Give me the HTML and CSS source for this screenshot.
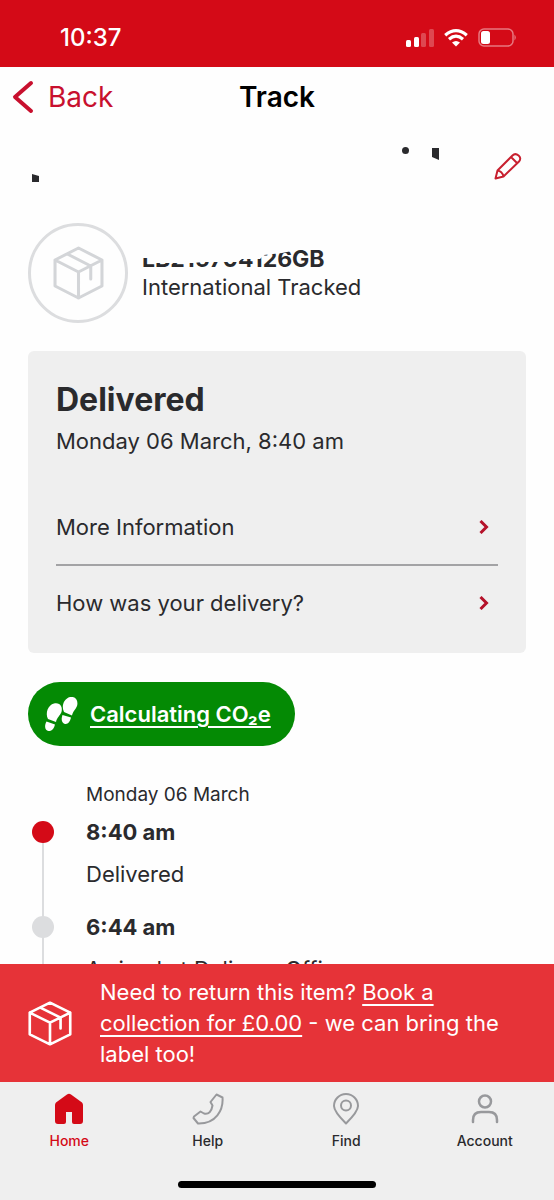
FILE: index.html
```html
<!DOCTYPE html>
<html lang="en">
<head>
<meta charset="utf-8">
<meta name="viewport" content="width=device-width, initial-scale=1">
<title>Track</title>
<link rel="stylesheet" href="styles.css">
</head>
<body>
<svg class="defs" aria-hidden="true">
  <symbol id="parcel" viewBox="0 0 50 54" preserveAspectRatio="none">
    <path d="M25 2 48 14V40L25 52 2 40V14ZM2 14 25 26 48 14M25 26V52M14 8 37 20V33" fill="none" stroke="currentColor" stroke-linejoin="round" stroke-linecap="round"/>
  </symbol>
  <symbol id="chevron" viewBox="0 0 10 14">
    <path d="M1.500 1 7.500 7 1.500 13" fill="none" stroke="currentColor" stroke-width="3"/>
  </symbol>
</svg>
<div class="app">
  <div class="status">
    <span class="clock">10:37</span>
    <div class="signals">
      <svg width="28" height="18" viewBox="0 0 28 18" fill="#fff"><rect x="0" y="11" width="5" height="7" rx="1.5"/><rect x="8" y="8" width="5" height="10" rx="1.5"/><g opacity=".25"><rect x="15" y="4" width="5" height="14" rx="1.5"/><rect x="23" y="0" width="5" height="18" rx="1.5"/></g></svg>
      <svg width="24" height="18" viewBox="0 0 24 18" fill="none" stroke="#fff" stroke-width="3.2"><path d="M1.2 6.2Q12-2.8 22.8 6.2M5 10.2Q12 4.2 19 10.2"/><path d="M8 13.5Q12 10.500 16 13.500L12 17.500Z" fill="#fff" stroke="none"/></svg>
      <svg width="39" height="19" viewBox="0 0 39 19"><rect x="1" y="1" width="34" height="17" rx="5" fill="none" stroke="#fff" stroke-opacity=".45" stroke-width="1.500"/><rect x="3" y="3" width="9" height="13" rx="2.500" fill="#fff"/><path d="M36.500 6.500Q39 9.500 36.500 12.500Z" fill="#fff" opacity=".5"/></svg>
    </div>
  </div>
  <header class="topbar">
    <button class="back" type="button"><svg width="22" height="34" viewBox="0 0 22 34" fill="none" stroke="currentColor" stroke-width="4" stroke-linecap="round" stroke-linejoin="round"><path d="M19 3 3 17 19 31"/></svg>Back</button>
    <h1 class="title">Track</h1>
  </header>
  <main class="content">
    <div class="sender">
      <svg class="marks" width="412" height="40" viewBox="0 0 412 40" fill="#2a2a2d" role="img" aria-label="Sender name hidden"><path d="M4 27 11 29V35H4Z"/><circle cx="377.500" cy="3.500" r="3.500"/><path d="M404 1H411V13L404 10Z"/></svg>
      <button class="edit" type="button" aria-label="Edit name"><svg width="28" height="28" viewBox="0 0 28 28" fill="none" stroke="currentColor" stroke-width="2" stroke-linejoin="round"><path d="M1.500 25.500 3.500 17.500 18.500 2.500C22-1 29 4 25 8.500L9.500 23.500ZM3.500 17.500Q8 18 9.500 23.500M17 4 23.500 10.500"/></svg></button>
    </div>
    <section class="parcel">
      <div class="disc"><svg width="51" height="54" stroke-width="3"><use href="#parcel"/></svg></div>
      <div class="ident">
        <strong class="number">LB216704126GB<svg class="cover" viewBox="0 0 210 28" preserveAspectRatio="none" fill="#fefefe"><path d="M0 0H210V4H160L140 8L122 10 118 14H100L96 17 60 17 52 18 14 18 8 13H0Z"/></svg></strong>
        <span class="service">International Tracked</span>
      </div>
    </section>
    <section class="card">
      <h2 class="state">Delivered</h2>
      <p class="when">Monday 06 March, 8:40 am</p>
      <button class="row" type="button">More Information<svg width="10" height="14"><use href="#chevron"/></svg></button>
      <button class="row" type="button">How was your delivery?<svg width="10" height="14"><use href="#chevron"/></svg></button>
    </section>
    <button class="pill" type="button">
      <svg width="34" height="34" viewBox="0 0 34 34" fill="#fff"><path d="M4 22C1 16 4 8 10 6.500 16 5 19 10 17.500 15 16 19 13 20 12 25Z"/><path d="M2.500 24.500 11 27.500C10 32 7.500 34.500 4.500 34 1 33.500 0 29 2.500 24.500Z"/><path d="M20 15C17 9 20 1.500 26 0 32-1 34.500 4 33 9 31.500 13 29 14 28 18.500Z"/><path d="M18.500 18 27 20.500C26 25 24 27.500 21 27 17.500 26 17 22 18.500 18Z"/></svg>
      <span class="link">Calculating CO₂e</span>
    </button>
    <section class="history">
      <p class="day">Monday 06 March</p>
      <ol class="events">
        <li class="event current"><strong class="time">8:40 am</strong><span class="what">Delivered</span></li>
        <li class="event"><strong class="time">6:44 am</strong><span class="what">Arrived at Delivery Office</span></li>
      </ol>
    </section>
  </main>
  <aside class="banner">
    <svg width="44" height="45" stroke-width="3"><use href="#parcel"/></svg>
    <p class="offer">Need to return this item? <a href="#">Book a collection for £0.00</a> - we can bring the label too!</p>
  </aside>
  <nav class="tabs">
    <a class="tab active" href="#"><svg width="32" height="32" viewBox="0 0 32 32"><path d="M14 1.500Q16 0 18 1.500L29 9.500Q30 10.500 30 12V28Q30 31 27 31H21Q19 31 19 29V19H13V29Q13 31 11 31H5Q2 31 2 28V12Q2 10.500 3 9.500Z" fill="currentColor"/></svg>Home</a>
    <a class="tab" href="#"><svg width="32" height="32" viewBox="0 0 32 32"><path d="M24.500 1.500 30.500 4.500C31.500 17 24 31 6 30.500L1.500 25 2 23.500 8.500 18.500 12 20.500Q19 22 20.500 12.500L18.500 9Z"/></svg>Help</a>
    <a class="tab" href="#"><svg width="32" height="32" viewBox="0 0 32 32"><path d="M16 30.500C10 24.500 4 18 4 13a12 12 0 0 1 24 0C28 18 22 24.500 16 30.500Z"/><circle cx="16" cy="12.500" r="5"/></svg>Find</a>
    <a class="tab" href="#"><svg class="bold" width="32" height="32" viewBox="0 0 32 32"><circle cx="16" cy="8.500" r="6"/><path d="M4 29V27Q4 19 12 19H20Q28 19 28 27V29"/></svg>Account</a>
  </nav>
  <div class="homebar"></div>
</div>
</body>
</html>
```
FILE: styles.css
```css
* { box-sizing: border-box; margin: 0; }
body { font-family: Inter, "Liberation Sans", sans-serif; font-size: 22px; line-height: 28px; color: #2a2a2d; background: #fefefe; }
button { font: inherit; color: inherit; background: none; border: 0; padding: 0; text-align: left; }
svg { flex: none; display: block; }
.defs { position: absolute; width: 0; height: 0; }
.app { display: flex; flex-direction: column; height: 100vh; }

.status { display: flex; justify-content: space-between; align-items: center; height: 67px; padding: 8px 37px 0 60px; background: #d40a17; color: #fff; flex: none; }
.clock { font-size: 24px; font-weight: 500; }
.signals { display: flex; align-items: center; gap: 10px; }

.topbar { display: grid; grid-template-columns: 1fr auto 1fr; align-items: center; height: 60px; padding: 0 12px; flex: none; }
.back { display: flex; align-items: center; gap: 14px; color: #c8102e; font-size: 28px; }
.title { font-size: 28px; font-weight: 600; color: #000; }

.content { flex: 1; min-height: 0; overflow: hidden; padding: 20px 28px 0; }
.sender { display: flex; justify-content: space-between; align-items: center; height: 40px; padding-right: 4px; }
.edit { color: #c8202f; }
.parcel { display: flex; align-items: center; gap: 14px; margin-top: 36px; }
.disc { display: flex; align-items: center; justify-content: center; width: 100px; height: 100px; border: 3px solid #dcdddf; border-radius: 50%; color: #d3d5d8; }
.ident { display: flex; flex-direction: column; }
.number { position: relative; font-size: 23px; }
.cover { position: absolute; left: 0; top: 0; width: 210px; height: 28px; }

.card { display: flex; flex-direction: column; margin-top: 28px; padding: 28px 28px 14px; background: #efefef; border-radius: 6px; }
.state { font-size: 32px; line-height: 42px; }
.when { margin-top: 6px; margin-bottom: 34px; }
.row { display: flex; justify-content: space-between; align-items: center; height: 75px; padding-right: 9px; }
.row svg { color: #b5122a; }
.row + .row { border-top: 2px solid #a3a3a5; }

.pill { display: flex; align-items: center; gap: 12px; height: 64px; margin-top: 29px; padding: 0 24px 0 16px; border-radius: 32px; background: #048a04; color: #fff; font-weight: 600; }
.link { text-decoration: underline; text-decoration-thickness: 2px; text-underline-offset: 4px; }

.history { margin-top: 35px; }
.day { padding-left: 58px; font-size: 19px; }
.events { list-style: none; padding: 0; }
.event { position: relative; display: flex; flex-direction: column; gap: 14px; padding: 9px 0 16px 58px; }
.event::before { content: ""; position: absolute; left: 14px; top: 24px; bottom: -24px; width: 2px; background: #dcdddf; }
.event::after { content: ""; position: absolute; left: 4px; top: 12px; width: 22px; height: 22px; border-radius: 50%; background: #dcdddf; z-index: 1; }
.current::after { background: #d40a17; }

.banner { display: flex; align-items: center; gap: 28px; padding: 13px 28px 12px; background: #e63338; color: #fff; flex: none; }
.offer { line-height: 31px; }
.offer a { color: inherit; text-decoration-thickness: 2px; text-underline-offset: 4px; }

.tabs { display: grid; grid-template-columns: repeat(4, 1fr); padding-top: 11px; background: #efefef; flex: none; }
.tab { display: flex; flex-direction: column; align-items: center; gap: 6px; font-size: 14px; line-height: 20px; font-weight: 500; color: inherit; text-decoration: none; }
.tab svg { fill: none; stroke: #98999c; stroke-width: 2; stroke-linejoin: round; stroke-linecap: round; }
.tab .bold { stroke-width: 2.5; }
.tab.active { color: #d40a17; }
.tab.active svg { stroke: none; }
.homebar { display: flex; justify-content: center; padding: 30px 0 12px; background: #efefef; flex: none; }
.homebar::before { content: ""; width: 198px; height: 7px; border-radius: 4px; background: #000; }
```
